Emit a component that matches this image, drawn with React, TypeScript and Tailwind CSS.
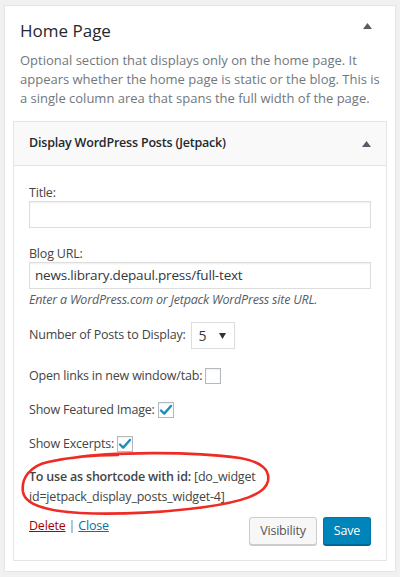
import React from "react";

const font = { fontFamily: '"Open Sans", "Noto Sans", sans-serif' };

function Caret() {
  return (
    <svg width="9" height="6" viewBox="0 0 9 6" className="block">
      <path d="M4.5 0 L9 6 L0 6 Z" fill="#555d66" />
    </svg>
  );
}

function Checkbox({ checked }: { checked?: boolean }) {
  return (
    <span className="inline-flex h-[16px] w-[16px] items-center justify-center border border-[#b4b9be] bg-white shadow-[inset_0_1px_2px_rgba(0,0,0,0.07)]">
      {checked && (
        <svg width="14" height="12" viewBox="0 0 14 12">
          <path
            d="M2 6.5 L5.2 9.6 L12 2"
            fill="none"
            stroke="#1e8cbe"
            strokeWidth="2.4"
            strokeLinecap="round"
            strokeLinejoin="round"
          />
        </svg>
      )}
    </span>
  );
}

export default function App() {
  return (
    <div
      className="relative min-h-[577px] w-[400px] overflow-hidden bg-[#f1f1f1] pt-[5px] pl-[4px]"
      style={font}
    >
      <div className="h-[567px] w-[392px] border border-[#e5e5e5] bg-white">
        {/* section header */}
        <div className="flex items-start justify-between pl-[15px] pr-[23px] pt-[13px]">
          <h2 className="text-[17px] leading-[24px] text-[#23282d]">
            Home Page
          </h2>
          <div className="pt-[4px]">
            <Caret />
          </div>
        </div>
        <p className="mt-[8px] pl-[15px] pr-[12px] text-[13px] leading-[19px] text-[#72777c]">
          Optional section that displays only on the home page. It appears
          whether the home page is static or the blog. This is a single column
          area that spans the full width of the page.
        </p>

        {/* widget */}
        <div className="ml-[8px] mt-[13px] h-[440px] w-[374px] border border-[#e5e5e5] bg-white">
          <div className="flex h-[44px] items-center justify-between border-b border-[#e5e5e5] bg-[#f9f9f9] pl-[15px] pr-[15px]">
            <span className="text-[12.5px] font-semibold tracking-[-0.2px] text-[#23282d]">
              Display WordPress Posts (Jetpack)
            </span>
            <Caret />
          </div>

          <div className="px-[15px] pt-[19px] text-[12.5px] tracking-[-0.2px] text-[#444]">
            <label className="block leading-[16px]">Title:</label>
            <div className="h-[27px] w-full border border-[#ddd] bg-white shadow-[inset_0_1px_2px_rgba(0,0,0,0.07)]" />

            <label className="mt-[18px] block leading-[16px]">Blog URL:</label>
            <div className="flex h-[27px] w-full items-center border border-[#ddd] bg-white px-[5px] text-[13.5px] text-[#32373c] shadow-[inset_0_1px_2px_rgba(0,0,0,0.07)]">
              news.library.depaul.press/full-text
            </div>
            <p className="mt-[2px] italic leading-[18px] text-[#555d66]">
              Enter a WordPress.com or Jetpack WordPress site URL.
            </p>

            <div className="mt-[13px] flex items-center gap-[5px]">
              <span>Number of Posts to Display:</span>
              <div className="flex h-[27px] w-[44px] items-center justify-between border border-[#ddd] bg-white pl-[7px] pr-[8px] text-[14px] text-[#32373c]">
                <span>5</span>
                <svg width="7" height="6" viewBox="0 0 7 6">
                  <path d="M0 0 L7 0 L3.5 6 Z" fill="#333" />
                </svg>
              </div>
            </div>

            <div className="mt-[18px] flex h-[18px] items-center gap-[3px]">
              <span>Open links in new window/tab:</span>
              <Checkbox />
            </div>

            <div className="mt-[16px] flex h-[18px] items-center gap-[3px]">
              <span>Show Featured Image:</span>
              <Checkbox checked />
            </div>

            <div className="mt-[16px] flex h-[18px] items-center gap-[3px]">
              <span>Show Excerpts:</span>
              <Checkbox checked />
            </div>

            <p className="mt-[14px] w-[240px] leading-[20px]">
              <strong className="font-semibold">To use as shortcode with id:</strong>{" "}
              [do_widget id=jetpack_display_posts_widget-4]
            </p>

            <div className="mt-[10px] flex items-start justify-between">
              <div className="leading-[17px]">
                <a className="text-[#a00] underline">Delete</a>
                <span className="text-[#72777c]"> | </span>
                <a className="text-[#0073aa] underline">Close</a>
              </div>
              <div className="flex gap-[6px]">
                <button className="h-[28px] rounded-[3px] border border-[#ccc] bg-[#f7f7f7] px-[10px] text-[12.5px] tracking-[-0.2px] text-[#555] shadow-[0_1px_0_#ccc]">
                  Visibility
                </button>
                <button className="h-[28px] rounded-[3px] border border-[#0073aa] border-b-[#006799] bg-[#0085ba] px-[10px] text-[12.5px] tracking-[-0.2px] text-white shadow-[0_1px_0_#006799]">
                  Save
                </button>
              </div>
            </div>
          </div>
        </div>
      </div>

      {/* hand-drawn highlight around the shortcode */}
      <svg
        className="pointer-events-none absolute left-0 top-0"
        width="400"
        height="577"
        viewBox="0 0 400 577"
      >
        <path
          d="M72 458 C110 452 190 451 240 458 C262 462 270 470 268 481 C265 495 240 502 205 507 C170 512 120 515 80 513 C45 511 25 504 23 492 C21 478 30 466 48 462 C70 457 95 455 118 455"
          fill="none"
          stroke="#ee2b24"
          strokeWidth="2.6"
          strokeLinecap="round"
          strokeLinejoin="round"
        />
      </svg>
    </div>
  );
}
